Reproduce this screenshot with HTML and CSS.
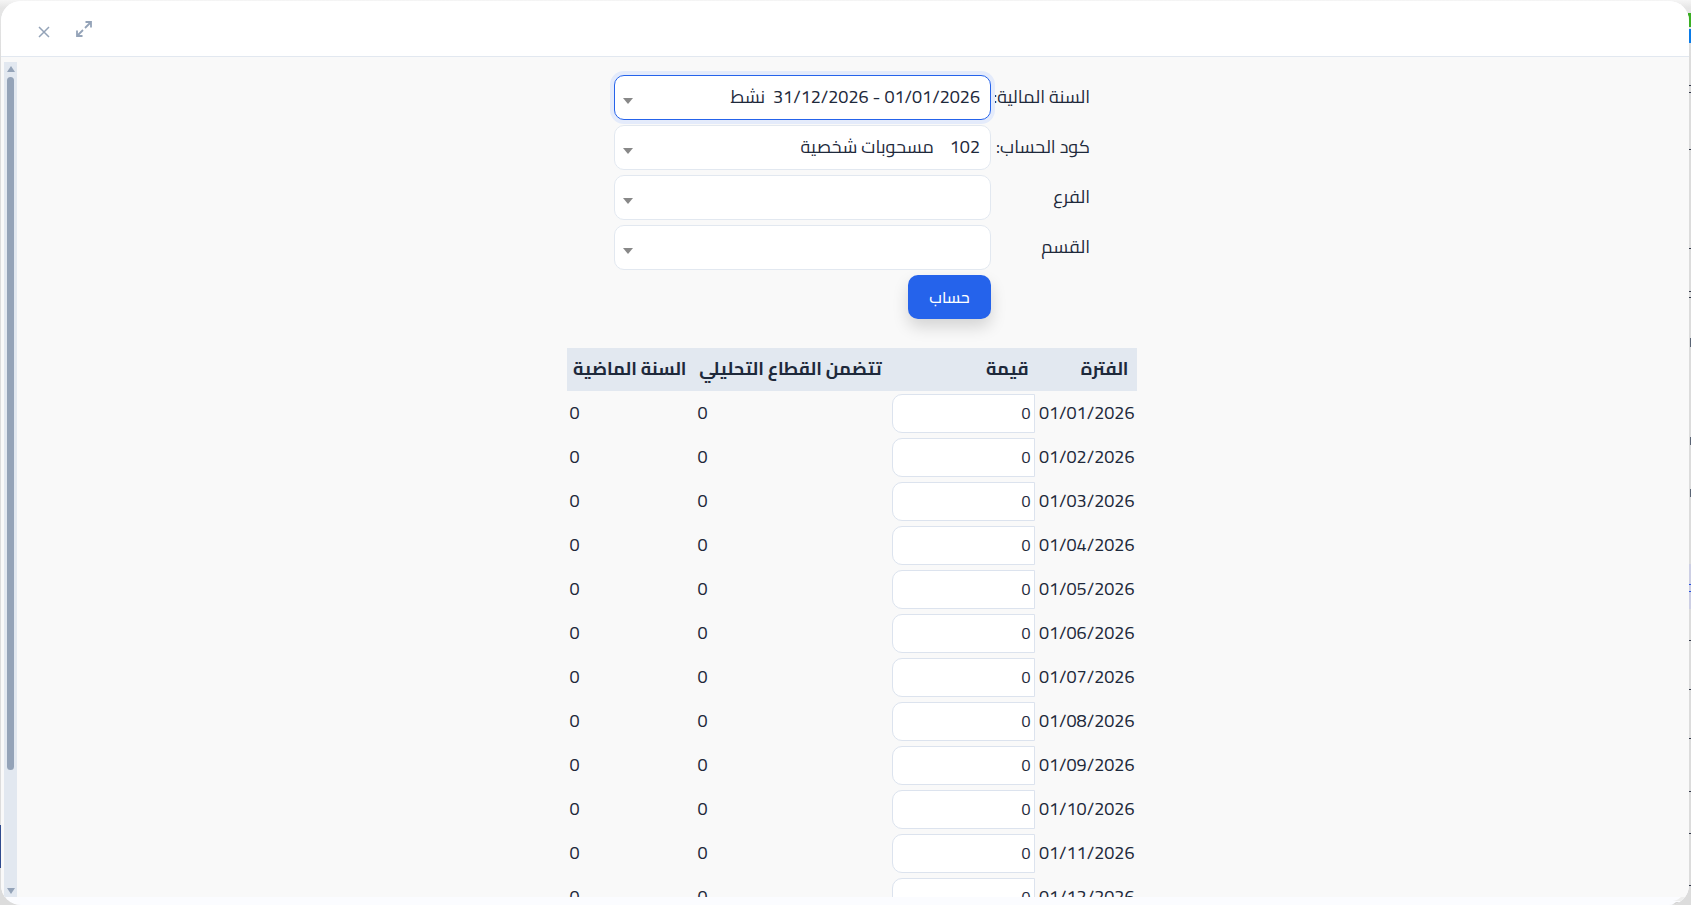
FILE: index.html
```html
<!DOCTYPE html>
<html lang="ar" dir="rtl">
<head>
<meta charset="UTF-8" />
<meta name="viewport" content="width=device-width, initial-scale=1" />
<title>حساب</title>
<link rel="stylesheet" href="styles.css">
</head>
<body>

<div class="dialog" role="dialog">
  <header class="dialog-header">
    <button type="button" class="icon-btn expand" aria-label="تكبير">
      <svg width="16" height="16" viewBox="0 0 16 16" fill="none" stroke="currentColor" stroke-width="1.8">
        <path d="M9 7 14.5 1.5M9.5 1H15V6.5M7 9 1.5 14.5M1 9.5V15H6.5" />
      </svg>
    </button>
    <button type="button" class="icon-btn" aria-label="إغلاق">
      <svg width="12" height="12" viewBox="0 0 12 12" fill="none" stroke="currentColor" stroke-width="1.5">
        <path d="M1 1 11 11M11 1 1 11" />
      </svg>
    </button>
  </header>

  <div class="dialog-body">
    <main class="content">
      <form class="filters">
        <label for="year">السنة المالية:</label>
        <div class="select-box active">
          <select id="year"><option>01/01/2026 - 31/12/2026&nbsp; نشط</option></select>
        </div>
        <label for="account">كود الحساب:</label>
        <div class="select-box">
          <select id="account"><option>102&nbsp;&nbsp;&nbsp; مسحوبات شخصية</option></select>
        </div>
        <label for="branch">الفرع</label>
        <div class="select-box">
          <select id="branch"><option></option></select>
        </div>
        <label for="department">القسم</label>
        <div class="select-box">
          <select id="department"><option></option></select>
        </div>
        <button type="button" class="submit-btn">حساب</button>
      </form>

      <table class="periods">
        <thead>
          <tr>
            <th class="col-period">الفترة</th>
            <th class="col-value">قيمة</th>
            <th class="col-segment">تتضمن القطاع التحليلي</th>
            <th class="col-last">السنة الماضية</th>
          </tr>
        </thead>
        <tbody id="rows"></tbody>
      </table>
    </main>

    <div class="scrollbar">
      <span class="arrow up"></span>
      <div class="track"><div class="thumb"></div></div>
      <span class="arrow down"></span>
    </div>
  </div>

  <svg class="grip" width="14" height="8" viewBox="0 0 14 8">
    <path d="M0 4Q5 4 9 0H14V4Z" fill="#eeeeee" />
    <path d="M0 8 4 5H10L7 8Z" fill="#d5d5d5" />
  </svg>
</div>

<script>
  const rows = document.getElementById('rows');
  for (let m = 1; m <= 12; m++) {
    const date = `01/${String(m).padStart(2, '0')}/2026`;
    rows.insertAdjacentHTML('beforeend', `
      <tr>
        <td>${date}</td>
        <td><input type="text" value="0" aria-label="${date}"></td>
        <td class="num">0</td>
        <td class="num">0</td>
      </tr>`);
  }
</script>

</body>
</html>
```
FILE: styles.css
```css
* {
  box-sizing: border-box;
}
body {
  margin: 0;
  height: 100vh;
  padding: 1px 2px 0 1px;
  overflow: hidden;
  font-family: Cairo, "Noto Sans", "Noto Sans Arabic", "DejaVu Sans", sans-serif;
  font-size: 18px;
  color: #1e293b;
  /* page edges behind the dialog */
  background:
    linear-gradient(#3bae24, #3bae24) right 13px / 3px 14px no-repeat,
    linear-gradient(#0a7be8, #0a7be8) right 29px / 3px 14px no-repeat,
    linear-gradient(#343a4a, #343a4a) right 85px / 2px 1px no-repeat,
    linear-gradient(#343a4a, #343a4a) right 92px / 2px 1px no-repeat,
    linear-gradient(#343a4a, #343a4a) right 149px / 2px 1px no-repeat,
    linear-gradient(#343a4a, #343a4a) right 248px / 2px 1px no-repeat,
    linear-gradient(#343a4a, #343a4a) right 291px / 2px 1px no-repeat,
    linear-gradient(#343a4a, #343a4a) right 297px / 2px 1px no-repeat,
    linear-gradient(#5a6475, #5a6475) right 338px / 1px 9px no-repeat,
    linear-gradient(#5a6475, #5a6475) right 437px / 1px 8px no-repeat,
    linear-gradient(#5a6475, #5a6475) right 489px / 1px 8px no-repeat,
    linear-gradient(#2450e0, #2450e0) right 584px / 2px 1px no-repeat,
    linear-gradient(#2450e0, #2450e0) right 591px / 2px 1px no-repeat,
    linear-gradient(#cdcfe4, #cdcfe4) right 564px / 2px 45px no-repeat,
    linear-gradient(#343a4a, #343a4a) right 640px / 2px 1px no-repeat,
    linear-gradient(#343a4a, #343a4a) right 689px / 2px 1px no-repeat,
    linear-gradient(#343a4a, #343a4a) right 738px / 2px 1px no-repeat,
    linear-gradient(#343a4a, #343a4a) right 791px / 2px 1px no-repeat,
    linear-gradient(#343a4a, #343a4a) right 833px / 2px 1px no-repeat,
    linear-gradient(#343a4a, #343a4a) right 885px / 2px 1px no-repeat,
    linear-gradient(#2f4b8f, #2f4b8f) left 825px / 1px 43px no-repeat,
    linear-gradient(#f5f5f5, #e6e6e6 8px, #dcdcdc 60px);
}
button,
select,
input {
  font: inherit;
  color: inherit;
}
.dialog {
  position: relative;
  display: flex;
  flex-direction: column;
  height: 100%;
  border-radius: 20px;
  background: #fbfcff;
  overflow: hidden;
}
.dialog-header {
  display: flex;
  flex: none;
  justify-content: flex-end;
  align-items: center;
  gap: 15px;
  height: 56px;
  padding: 0 30px;
  border-bottom: 1px solid #e2e8f0;
  background: #fff;
}
.icon-btn {
  display: grid;
  place-items: center;
  width: 25px;
  height: 24px;
  margin-top: 6px;
  padding: 0;
  border: none;
  background: none;
  color: #94a3b8;
}
.icon-btn.expand {
  margin-top: 0;
}
.dialog-body {
  display: flex;
  flex: 1;
  min-height: 0;
  padding: 5px 3px 0;
  margin-bottom: 8px;
  background: #f9f9f9;
}
.content {
  flex: 1;
  overflow: hidden;
  padding-top: 13px;
}
.filters {
  display: grid;
  grid-template-columns: 99px 377px;
  grid-auto-rows: 45px;
  row-gap: 5px;
  align-items: center;
  justify-content: center;
  padding-left: 1px;
}
.filters label {
  padding-bottom: 2px;
  white-space: nowrap;
}
.select-box {
  position: relative;
  height: 45px;
}
.select-box::after {
  content: "";
  position: absolute;
  left: 9px;
  top: 23px;
  border: 5px solid transparent;
  border-top: 6px solid #888;
  border-bottom: none;
  pointer-events: none;
}
.select-box select {
  display: block;
  width: 100%;
  height: 100%;
  padding: 0 10px 2px;
  border: 1px solid #e2e8f0;
  border-radius: 10px;
  background: #fff;
  appearance: none;
}
.select-box.active select {
  border-color: #2563eb;
  box-shadow: 0 0 0 4px #e4ebfb;
}
.submit-btn {
  grid-column: 2;
  align-self: start;
  justify-self: start;
  width: 83px;
  height: 44px;
  padding: 0;
  border: none;
  border-radius: 10px;
  background: #2563eb;
  color: #fff;
  font-size: 16px;
  font-weight: 500;
  box-shadow: 0 8px 16px rgba(0, 0, 0, 0.15);
}
.periods {
  table-layout: fixed;
  width: 570px;
  margin: 28px auto 0;
  border-collapse: collapse;
}
.periods th {
  height: 43px;
  padding: 0 8px 2px;
  background: #e2e8f0;
  font-weight: bold;
  line-height: 32px;
  text-align: right;
  white-space: nowrap;
}
.col-period {
  width: 100px;
}
.col-value {
  width: 147px;
}
.col-segment {
  width: 195px;
}
.periods td {
  height: 44px;
  padding: 0 2px;
  line-height: 32px;
  white-space: nowrap;
}
.periods td.num {
  padding: 0 3px;
  text-align: left;
}
.periods input {
  display: block;
  width: 143px;
  height: 39px;
  padding: 0 3px;
  border: 1px solid #dce3ee;
  border-radius: 10px 0 0 10px;
  background: #fff;
  font-size: 16px;
}
.scrollbar {
  display: flex;
  flex-direction: column;
  align-items: center;
  width: 13px;
  padding: 4px 0 3px;
  background: #e2e8f0;
}
.arrow {
  border: 4px solid transparent;
}
.arrow.up {
  border-top: none;
  border-bottom: 6px solid #94a3b8;
}
.arrow.down {
  border-bottom: none;
  border-top: 6px solid #94a3b8;
}
.track {
  flex: 1;
  width: 7px;
  margin: 5px 0;
}
.thumb {
  height: 86%;
  border-radius: 4px;
  background: #94a3b8;
}
.grip {
  position: absolute;
  right: 3px;
  bottom: 0;
}
```
